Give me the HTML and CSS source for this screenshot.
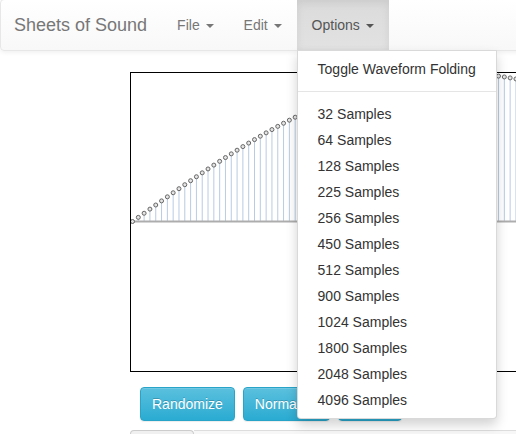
FILE: index.html
```html
<!DOCTYPE html>
<html>
<head>
<meta charset="utf-8">
<title>Sheets of Sound</title>
<link rel="stylesheet" href="styles.css">
</head>
<body>
<nav class="navbar">
  <a class="brand" href="#">Sheets of Sound</a>
  <ul class="nav">
    <li class="nav-item"><a class="nav-link" href="#">File <span class="caret"></span></a></li>
    <li class="nav-item"><a class="nav-link" href="#">Edit <span class="caret"></span></a></li>
    <li class="nav-item open"><a class="nav-link" href="#">Options <span class="caret"></span></a>
      <ul class="dropdown-menu">
        <li><a class="dd-item" href="#">Toggle Waveform Folding</a></li>
        <li class="divider"></li>
        <li><a class="dd-item" href="#">32 Samples</a></li>
        <li><a class="dd-item" href="#">64 Samples</a></li>
        <li><a class="dd-item" href="#">128 Samples</a></li>
        <li><a class="dd-item" href="#">225 Samples</a></li>
        <li><a class="dd-item" href="#">256 Samples</a></li>
        <li><a class="dd-item" href="#">450 Samples</a></li>
        <li><a class="dd-item" href="#">512 Samples</a></li>
        <li><a class="dd-item" href="#">900 Samples</a></li>
        <li><a class="dd-item" href="#">1024 Samples</a></li>
        <li><a class="dd-item" href="#">1800 Samples</a></li>
        <li><a class="dd-item" href="#">2048 Samples</a></li>
        <li><a class="dd-item" href="#">4096 Samples</a></li>
      </ul>
    </li>
  </ul>
</nav>
<main class="main">
  <div class="wave-box">
    <svg id="wave" class="wave" width="512" height="298" viewBox="0 0 512 298" xmlns="http://www.w3.org/2000/svg"></svg>
  </div>
  <div class="btn-row">
    <button class="btn">Randomize</button>
    <button class="btn">Normalize</button>
    <button class="btn">Export</button>
  </div>
  <div class="tabs">
    <div class="tab"></div>
    <div class="tab-rest"></div>
  </div>
</main>
<script src="script.js"></script>
</body>
</html>
```
FILE: styles.css
```css
html, body {
  margin: 0;
  padding: 0;
  overflow: hidden;
}
body {
  font-family: "Liberation Sans", Helvetica, Arial, sans-serif;
  font-size: 14px;
  line-height: 20px;
  color: #333;
  background: #fff;
}
a { text-decoration: none; }

.navbar {
  display: flex;
  align-items: stretch;
  height: 50px;
  margin-top: -1px;
  width: 560px;
  border: 1px solid #e7e7e7;
  border-radius: 4px;
  background-image: linear-gradient(to bottom, #fff 0, #f8f8f8 100%);
  box-shadow: inset 0 1px 0 rgba(255,255,255,.15), 0 1px 5px rgba(0,0,0,.075);
  position: relative;
  z-index: 10;
}
.brand {
  font-size: 18px;
  line-height: 20px;
  padding: 15px 15px 15px 13px;
  color: #777;
}
.nav {
  display: flex;
  list-style: none;
  margin: 0;
  padding: 0;
}
.nav-item {
  position: relative;
}
.nav-link {
  display: block;
  padding: 15px;
  line-height: 20px;
  color: #777;
}
.open > .nav-link {
  color: #555;
  background-image: linear-gradient(to bottom, #dbdbdb 0, #e2e2e2 100%);
  box-shadow: inset 0 3px 9px rgba(0,0,0,.075);
}
.caret {
  display: inline-block;
  width: 0;
  height: 0;
  margin-left: 2px;
  vertical-align: middle;
  border-top: 4px solid;
  border-right: 4px solid transparent;
  border-left: 4px solid transparent;
}
.dropdown-menu {
  position: absolute;
  top: 100%;
  left: 0;
  width: 198px;
  margin: 0;
  padding: 5px 0;
  list-style: none;
  background: #fff;
  border: 1px solid rgba(0,0,0,.15);
  border-radius: 0 0 4px 4px;
  box-shadow: 0 6px 12px rgba(0,0,0,.175);
}
.dd-item {
  display: block;
  padding: 3px 20px;
  line-height: 20px;
  color: #333;
  white-space: nowrap;
}
.divider {
  height: 1px;
  margin: 9px 0;
  background: #e5e5e5;
}

.main {
  margin-top: 21px;
  padding-left: 130px;
  overflow: hidden;
}
.wave-box {
  width: 512px;
  height: 298px;
  border: 1px solid #000;
}
.wave { display: block; }
.btn-row {
  display: flex;
  gap: 8px;
  margin-top: 15px;
  padding-left: 10px;
}
.btn {
  font-family: inherit;
  font-size: 14px;
  line-height: 20px;
  padding: 6px 11px;
  color: #fff;
  text-shadow: 0 -1px 0 rgba(0,0,0,.2);
  background-image: linear-gradient(to bottom, #5bc0de 0, #2aabd2 100%);
  border: 1px solid #28a4c9;
  border-radius: 4px;
  box-shadow: inset 0 1px 0 rgba(255,255,255,.15), 0 1px 1px rgba(0,0,0,.075);
}
.tabs {
  display: flex;
  margin-top: 9px;
  height: 10px;
}
.tab {
  width: 62px;
  border: 1px solid #ccc;
  border-bottom: none;
  border-radius: 4px 4px 0 0;
  background: #f0f0f0;
}
.tab-rest {
  flex: 1;
  border-top: 1px solid #ddd;
  background: #f7f7f7;
}
```
FILE: script.js
```js
(function () {
  var svg = document.getElementById('wave');
  var NS = 'http://www.w3.org/2000/svg';
  var W = 512, zero = 148.5, amp = 148, dx = 5.81, x0 = 1.5, period = 225;
  var pts = [];
  for (var i = 0; x0 + i * dx < W + 3; i++) {
    var x = x0 + i * dx;
    var y = zero - amp * Math.sin(2 * Math.PI * i / period);
    pts.push([x, y]);
  }
  function el(name, attrs) {
    var e = document.createElementNS(NS, name);
    for (var k in attrs) e.setAttribute(k, attrs[k]);
    svg.appendChild(e);
    return e;
  }
  pts.forEach(function (p) {
    el('line', { x1: p[0], y1: p[1], x2: p[0], y2: zero, stroke: '#b9cbe3', 'stroke-width': 1 });
  });
  el('line', { x1: 0, y1: zero, x2: W, y2: zero, stroke: '#adadad', 'stroke-width': 2 });
  pts.forEach(function (p) {
    el('circle', { cx: p[0], cy: p[1], r: 2, fill: '#e4e4e4', stroke: '#666', 'stroke-width': 1 });
  });
})();
```
